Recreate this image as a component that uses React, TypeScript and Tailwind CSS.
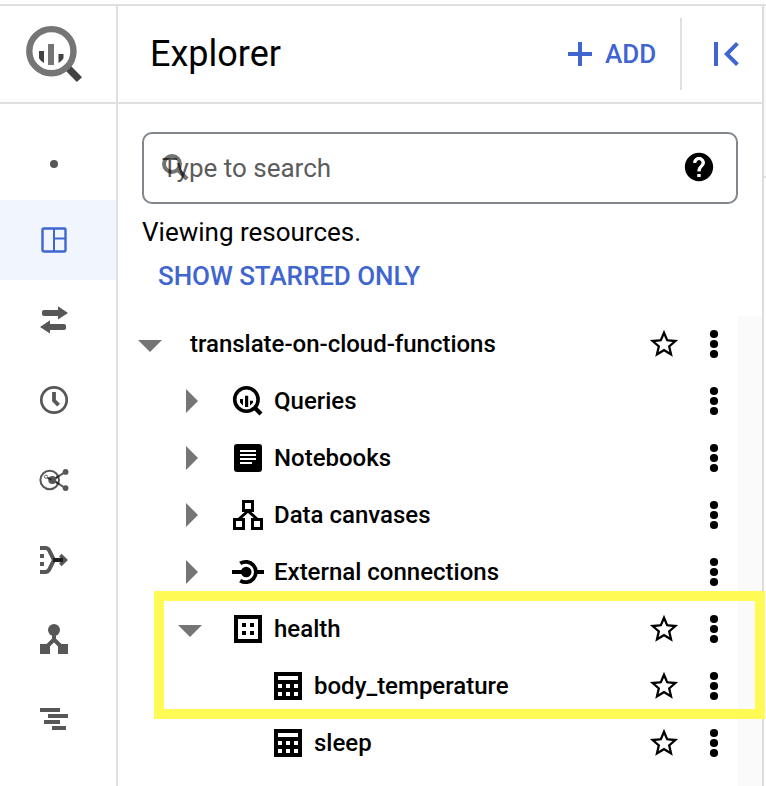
import type { ReactNode } from "react";

function Glyph({ children, size = 32 }: { children: ReactNode; size?: number }) {
  return (
    <svg width={size} height={size} viewBox="0 0 32 32" className="shrink-0" fill="currentColor">
      {children}
    </svg>
  );
}

const stroke = (w: number) => ({ fill: "none", stroke: "currentColor", strokeWidth: w });

const DashboardIcon = () => (
  <Glyph>
    <rect x="4.5" y="4.5" width="23" height="23" rx="1.2" {...stroke(2.4)} />
    <path d="M16 4.5v23M16 14.5h11.5" {...stroke(2)} />
  </Glyph>
);

const TransferIcon = () => (
  <Glyph>
    <path d="M6 6h14V2.2L30 9l-10 6.6V12H6a2 2 0 0 1-2-2V8a2 2 0 0 1 2-2z" />
    <path d="M26 26H12v3.6L2 23l10-6.8V20h14a2 2 0 0 1 2 2v2a2 2 0 0 1-2 2z" />
  </Glyph>
);

const ClockIcon = () => (
  <Glyph>
    <circle cx="16" cy="16" r="12.7" {...stroke(2.7)} />
    <path d="M16 8v8.5l4.6 4.6" {...stroke(3.8)} />
  </Glyph>
);

const HubIcon = () => (
  <Glyph>
    <circle cx="11.7" cy="16" r="9.3" {...stroke(2)} />
    <circle cx="14.3" cy="16" r="4" />
    <circle cx="27.6" cy="7.9" r="2.9" />
    <circle cx="27.6" cy="24.1" r="2.9" />
    <path d="M14.3 16L27.6 7.9M14.3 16l13.3 8.1" {...stroke(1.9)} />
    <path d="M9.4 13.7l4 2M18 14l3.2-2M18 18l3.2 2" className="text-[#222]" {...stroke(1.6)} />
    <circle cx="8" cy="12.7" r="1.6" fill="white" stroke="currentColor" strokeWidth="0.9" />
  </Glyph>
);

const MergeIcon = () => (
  <Glyph>
    <path d="M2 4h5.5c2 0 3 1 3.8 2.6L16 16l-4.7 9.4C10.5 27 9.5 28 7.5 28H2" {...stroke(4)} />
    <path d="M2 10h4v4H2zM2 18h4v4H2z" />
    <path d="M21 12.400l2.600-2.600L30 16l-6.400 6.200-2.600-2.600L24.400 16z" />
    <path d="M15 14h10v4H15z" className="text-[#1c1c1c]" fill="currentColor" />
  </Glyph>
);

const TreeIcon = () => (
  <Glyph>
    <circle cx="16" cy="6" r="6" />
    <path d="M2 20h10v10H2zM20 20h10v10H20z" />
    <path d="M16 10v6M16 15.5l-6.5 6.5M16 15.5l6.5 6.5" {...stroke(4)} />
  </Glyph>
);

const BarsIcon = () => (
  <Glyph>
    <path d="M2 4h20v4H2zM10 10h20v4H10zM6 16h16v4H6zM14 22h14v4H14z" />
  </Glyph>
);

const QueryIcon = () => (
  <Glyph>
    <circle cx="14.4" cy="14.5" r="11.7" {...stroke(3.6)} />
    <path d="M8 14h3v6.500L8 17.500zM13 10.700h3.200V22H13zM18 15.700h3v2L18 20.500z" />
    <path d="M22.500 22.500l6.500 6.500" {...stroke(4.2)} />
  </Glyph>
);

const NotebookIcon = () => (
  <Glyph>
    <rect x="2" y="2" width="28" height="28" rx="3" />
    <path d="M8 8h16v2H8zM8 12h16v2H8zM8 16h16v2H8zM8 20h12v2H8z" fill="white" />
  </Glyph>
);

const CanvasIcon = () => (
  <Glyph>
    <path d="M11.5 2.5h9v9h-9zM2.5 20.5h9v9h-9zM20.5 20.5h9v9h-9z" {...stroke(3)} />
    <path d="M16 12L7 20M16 12l9 8" {...stroke(3)} />
  </Glyph>
);

const ConnectionIcon = () => (
  <Glyph>
    <circle cx="14.2" cy="16" r="5.3" />
    <path d="M0 14h14v4H0zM25 14h7v4h-7z" />
    <path d="M8.2 7.4A10.2 10.2 0 1 1 8.2 24.6" {...stroke(3.8)} />
  </Glyph>
);

const DatasetIcon = () => (
  <Glyph>
    <path d="M4 4h24v24H4z" {...stroke(4)} />
    <path d="M10 10h4v4h-4zM18 10h4v4h-4zM10 18h4v4h-4zM18 18h4v4h-4z" />
  </Glyph>
);

const TableIcon = () => (
  <Glyph>
    <path d="M2 2h28v28H2z" />
    <path
      d="M6 6h20v4H6zM6 14h4v4H6zM14 14h4v4h-4zM22 14h4v4h-4zM6 22h4v4H6zM14 22h4v4h-4zM22 22h4v4h-4z"
      fill="white"
    />
  </Glyph>
);

const StarIcon = () => (
  <svg width="34" height="34" viewBox="0 0 24 24" className="shrink-0" fill="currentColor">
    <path d="M22 9.24l-7.19-.62L12 2 9.19 8.63 2 9.24l5.46 4.73L5.82 21 12 17.27 18.18 21l-1.63-7.03L22 9.24zM12 15.4l-3.76 2.27 1-4.28-3.32-2.88 4.38-.38L12 6.1l1.71 4.04 4.38.38-3.32 2.88 1 4.28L12 15.4z" />
  </svg>
);

const MoreIcon = () => (
  <svg width="20" height="32" viewBox="0 0 20 32" className="shrink-0" fill="currentColor">
    <circle cx="10" cy="6" r="4.1" />
    <circle cx="10" cy="16" r="4.1" />
    <circle cx="10" cy="26" r="4.1" />
  </svg>
);

function Caret({ open }: { open: boolean }) {
  return (
    <svg width="24" height="24" viewBox="0 0 24 24" className="shrink-0 text-[#757575]" fill="currentColor">
      <path d={open ? "M0 8h24L12 20z" : "M8 0v24l12-12z"} />
    </svg>
  );
}

type Level = "root" | "group" | "table";

const indent: Record<Level, string> = {
  root: "pl-5",
  group: "pl-[60px]",
  table: "pl-[154px]",
};

function Row(props: { level: Level; label: string; icon?: ReactNode; open?: boolean; star?: boolean }) {
  const { level, label, icon, open = false, star = false } = props;
  return (
    <div className={`flex h-[57px] shrink-0 items-center pr-[14px] pb-px ${indent[level]}`}>
      {level !== "table" && <Caret open={open} />}
      {level === "root" && <span className="w-7" />}
      {level === "group" && <span className="w-[30px]" />}
      {icon}
      <span className={`flex-1 text-2xl font-medium ${level === "root" ? "tracking-[-0.02px]" : "ml-[10px]"}`}>
        {label}
      </span>
      {star && <StarIcon />}
      <span className="w-[23px]" />
      <MoreIcon />
    </div>
  );
}

const navIcons = [DashboardIcon, TransferIcon, ClockIcon, HubIcon, MergeIcon, TreeIcon, BarsIcon];

function Sidebar() {
  return (
    <div className="flex w-[118px] shrink-0 flex-col border-r-2 border-[#e0e0e0]">
      <div className="flex h-[98px] shrink-0 items-center border-b-2 border-[#e0e0e0] pl-6">
        <svg width="60" height="60" viewBox="24 24 60 60">
          <path d="M71 66l11 11.200-5.200 4.800L65.500 70.500z" fill="#424242" />
          <circle cx="51.4" cy="51.2" r="22.1" fill="white" stroke="#757575" strokeWidth="6.4" />
          <path d="M39 51h5v12c-2-1-3.7-2.7-5-4.700zM58.500 54h5v4.300c-1.300 2-3 3.700-5 4.700z" fill="#424242" />
          <path d="M48 44h6v21h-6z" fill="#757575" />
        </svg>
      </div>
      <div className="flex flex-col pt-4 text-[#575757]">
        <div className="flex h-20 items-center justify-center pt-2 pr-2">
          <span className="size-2 rounded-full bg-current" />
        </div>
        {navIcons.map((Icon, i) => (
          <div
            key={i}
            className={`flex h-20 items-center justify-center pr-2 ${i === 0 ? "bg-[#f0f5fe] text-[#3f66d0]" : ""}`}
          >
            <Icon />
          </div>
        ))}
      </div>
    </div>
  );
}

function Header() {
  return (
    <div className="flex h-[98px] shrink-0 items-center border-b-2 border-[#e0e0e0] pr-3 pl-8 text-[#3f66d0]">
      <h1 className="flex-1 text-[36px] leading-none text-black">Explorer</h1>
      <svg width="24" height="24" viewBox="0 0 24 24">
        <path d="M12 0v24M0 12h24" {...stroke(4)} />
      </svg>
      <span className="ml-[13px] w-[51px] text-[26px] font-medium whitespace-nowrap">ADD</span>
      <span className="ml-6 h-[72px] w-0.5 bg-[#e0e0e0]" />
      <svg width="48" height="48" viewBox="0 0 24 24" className="ml-5" fill="currentColor">
        <path d="M18.41 16.59L13.82 12l4.59-4.59L17 6l-6 6 6 6zM6 6h2v12H6z" />
      </svg>
    </div>
  );
}

function SearchField() {
  return (
    <div className="mx-6 mt-7 flex h-[72px] shrink-0 items-center rounded-[10px] border-2 border-[#80868b] pl-[18px]">
      <div className="relative flex-1 text-[26px] leading-10 text-[#5c5c5c]">
        Type to search
        <svg width="28" height="28" viewBox="0 0 28 28" className="absolute top-1.5 left-0 text-black opacity-55">
          <circle cx="10" cy="10" r="8" {...stroke(4)} />
          <path d="M15.5 15.5l9.6 9.6" {...stroke(4.2)} />
        </svg>
      </div>
      <svg width="34" height="34" viewBox="0 0 24 24" className="mr-5 mb-0.5" fill="black">
        <path d="M12 2C6.48 2 2 6.48 2 12s4.48 10 10 10 10-4.48 10-10S17.52 2 12 2zm1 17h-2v-2h2v2zm2.07-7.75l-.9.92C13.45 12.9 13 13.5 13 15h-2v-.5c0-1.1.45-2.1 1.17-2.83l1.24-1.26c.37-.36.59-.86.59-1.41 0-1.1-.9-2-2-2s-2 .9-2 2H8c0-2.21 1.79-4 4-4s4 1.79 4 4c0 .88-.36 1.68-.93 2.25z" />
        <path
          d="M9 9c0-1.660 1.340-3 3-3s3 1.340 3 3c0 2.200-3 2.600-3 6M12 17v2"
          fill="none"
          stroke="white"
          strokeWidth="2.2"
        />
      </svg>
    </div>
  );
}

export default function App() {
  return (
    <div
      className="relative flex h-[786px] w-[766px] flex-col overflow-hidden bg-white pt-1 text-black"
      style={{ fontFamily: "Roboto, sans-serif" }}
    >
      <div className="flex min-h-0 flex-1 border-t-2 border-[#e0e0e0]">
        <Sidebar />
        <div className="flex w-[644px] shrink-0 flex-col">
          <Header />
          <SearchField />
          <p className="mt-3 ml-6 h-8 shrink-0 text-[26px] leading-8">Viewing resources.</p>
          <p className="mt-3 ml-10 h-8 shrink-0 text-[26px] leading-8 font-medium tracking-[-0.06px] text-[#3f66d0]">
            SHOW STARRED ONLY
          </p>
          <div className="mt-6 flex min-h-0 flex-1">
            <div className="flex min-w-0 flex-1 flex-col overflow-hidden">
              <Row level="root" label="translate-on-cloud-functions" open star />
              <Row level="group" label="Queries" icon={<QueryIcon />} />
              <Row level="group" label="Notebooks" icon={<NotebookIcon />} />
              <Row level="group" label="Data canvases" icon={<CanvasIcon />} />
              <Row level="group" label="External connections" icon={<ConnectionIcon />} />
              <Row level="group" label="health" icon={<DatasetIcon />} open star />
              <Row level="table" label="body_temperature" icon={<TableIcon />} star />
              <Row level="table" label="sleep" icon={<TableIcon />} star />
              <div className="flex h-[57px] shrink-0 items-center justify-end pr-[57px] pb-px">
                <StarIcon />
              </div>
            </div>
            <div className="w-6 bg-[#fafafa]" />
          </div>
        </div>
        <div className="flex flex-1 flex-col border-l-2 border-[#dcdcdc]">
          <div className="h-[172px] border-b-2 border-[#e0e0e0] bg-[#fafafa]" />
        </div>
      </div>
      <div className="absolute top-[591px] left-[154px] h-[128px] w-[611px] border-10 border-[#fffb54]" />
    </div>
  );
}
